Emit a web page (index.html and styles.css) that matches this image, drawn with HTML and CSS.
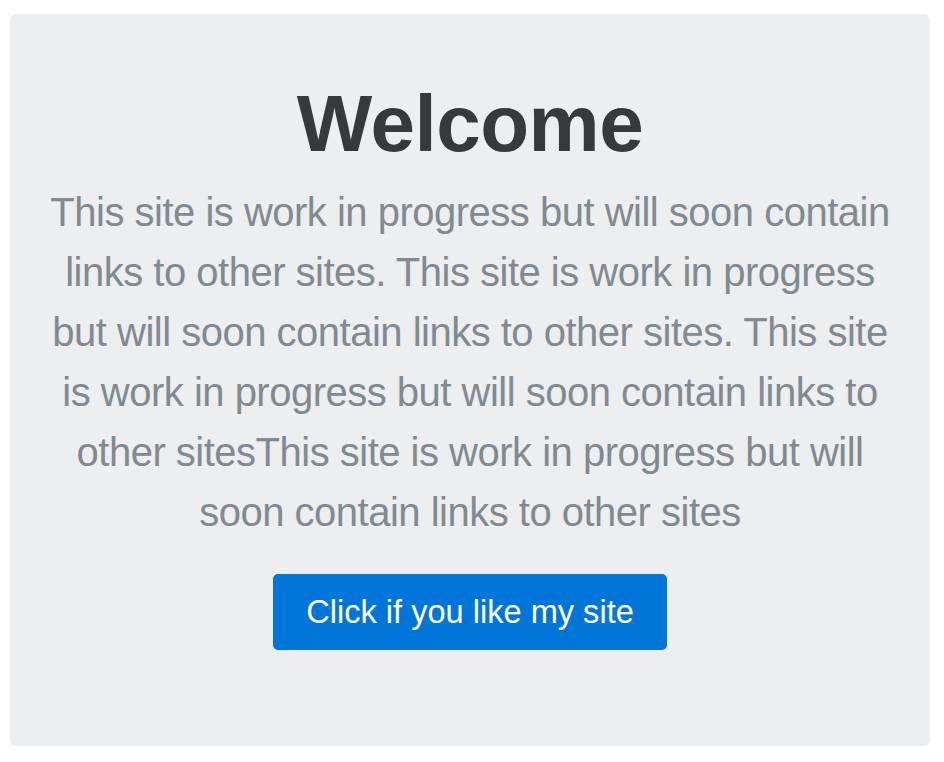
FILE: index.html
```html
<!DOCTYPE html>
<html>
<head>
<meta charset="utf-8">
<link rel="stylesheet" href="styles.css">
</head>
<body>
<div class="jumbotron">
  <h1 class="title">Welcome</h1>
  <p class="lead">This site is work in progress but will soon contain links to other sites. This site is work in progress but will soon contain links to other sites. This site is work in progress but will soon contain links to other sitesThis site is work in progress but will soon contain links to other sites</p>
  <p class="actions"><a class="btn" href="#">Click if you like my site</a></p>
</div>
</body>
</html>
```

FILE: styles.css
```css
html, body {
  margin: 0;
  padding: 0;
  background: #ffffff;
}
body {
  font-family: "Liberation Sans", Arial, Helvetica, sans-serif;
  padding: 14px 14px 16px 10px;
}
.jumbotron {
  background: #eceeef;
  border-radius: 6px;
  padding: 66px 32px 64px;
  text-align: center;
  height: 732px;
  box-sizing: border-box;
}
.title {
  margin: 0 0 14px;
  font-size: 80px;
  line-height: 88px;
  font-weight: 700;
  letter-spacing: -0.5px;
  color: #373a3c;
}
.lead {
  margin: 0 0 32px;
  font-size: 40px;
  line-height: 60px;
  letter-spacing: -0.5px;
  color: #818a91;
}
.actions {
  margin: 0 0 32px;
}
.btn {
  display: inline-block;
  background: #0275d8;
  color: #ffffff;
  text-decoration: none;
  font-size: 32.6px;
  line-height: 44px;
  padding: 16px 33px;
  border-radius: 5px;
}
```
